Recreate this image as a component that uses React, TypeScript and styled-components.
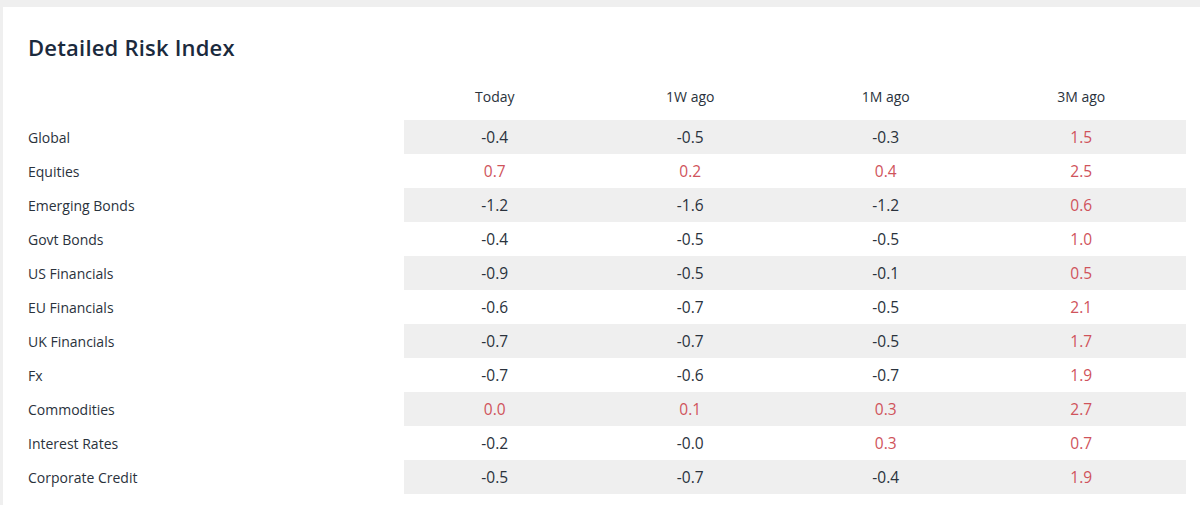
import React from 'react'
import styled, { createGlobalStyle } from 'styled-components'

const GlobalStyle = createGlobalStyle`
  html, body {
    margin: 0;
    padding: 0;
    background: #efefef;
    font-family: "Open Sans", "Liberation Sans", sans-serif;
  }
`

const Page = styled.div`
  padding: 7px 0 0 3px;
  height: 505px;
  box-sizing: border-box;
  overflow: hidden;
`

const Card = styled.div`
  background: #ffffff;
  height: 100%;
  padding: 26px 14px 0 25px;
  box-sizing: border-box;
`

const Title = styled.h2`
  margin: 0;
  font-size: 22px;
  line-height: 28px;
  font-weight: 600;
  color: #1b2a3d;
  letter-spacing: 0.2px;
`

const Table = styled.div`
  margin-top: 23px;
  display: grid;
  grid-template-columns: 376px repeat(4, 1fr);
`

const HeadCell = styled.div`
  height: 24px;
  margin-bottom: 12px;
  display: flex;
  align-items: center;
  justify-content: center;
  padding-right: 14px;
  font-size: 14px;
  color: #2a323c;
`

const Label = styled.div`
  height: 34px;
  display: flex;
  align-items: center;
  font-size: 14px;
  color: #2a323c;
`

const Value = styled.div<{ $shaded: boolean; $positive: boolean }>`
  height: 34px;
  display: flex;
  align-items: center;
  justify-content: center;
  padding-right: 14px;
  font-size: 15.5px;
  background: ${p => (p.$shaded ? '#efefef' : 'transparent')};
  color: ${p => (p.$positive ? '#cf535b' : '#2a323c')};
`

const headers = ['Today', '1W ago', '1M ago', '3M ago']

const rows: [string, string[]][] = [
  ['Global', ['-0.4', '-0.5', '-0.3', '1.5']],
  ['Equities', ['0.7', '0.2', '0.4', '2.5']],
  ['Emerging Bonds', ['-1.2', '-1.6', '-1.2', '0.6']],
  ['Govt Bonds', ['-0.4', '-0.5', '-0.5', '1.0']],
  ['US Financials', ['-0.9', '-0.5', '-0.1', '0.5']],
  ['EU Financials', ['-0.6', '-0.7', '-0.5', '2.1']],
  ['UK Financials', ['-0.7', '-0.7', '-0.5', '1.7']],
  ['Fx', ['-0.7', '-0.6', '-0.7', '1.9']],
  ['Commodities', ['0.0', '0.1', '0.3', '2.7']],
  ['Interest Rates', ['-0.2', '-0.0', '0.3', '0.7']],
  ['Corporate Credit', ['-0.5', '-0.7', '-0.4', '1.9']],
]

const App = () => {
  return (
    <>
      <GlobalStyle />
      <Page>
        <Card>
          <Title>Detailed Risk Index</Title>
          <Table>
            <div />
            {headers.map(h => (
              <HeadCell key={h}>{h}</HeadCell>
            ))}
            {rows.map(([name, vals], i) => (
              <React.Fragment key={name}>
                <Label>{name}</Label>
                {vals.map((v, j) => (
                  <Value key={j} $shaded={i % 2 === 0} $positive={!v.startsWith('-')}>
                    {v}
                  </Value>
                ))}
              </React.Fragment>
            ))}
          </Table>
        </Card>
      </Page>
    </>
  )
}

export default App
